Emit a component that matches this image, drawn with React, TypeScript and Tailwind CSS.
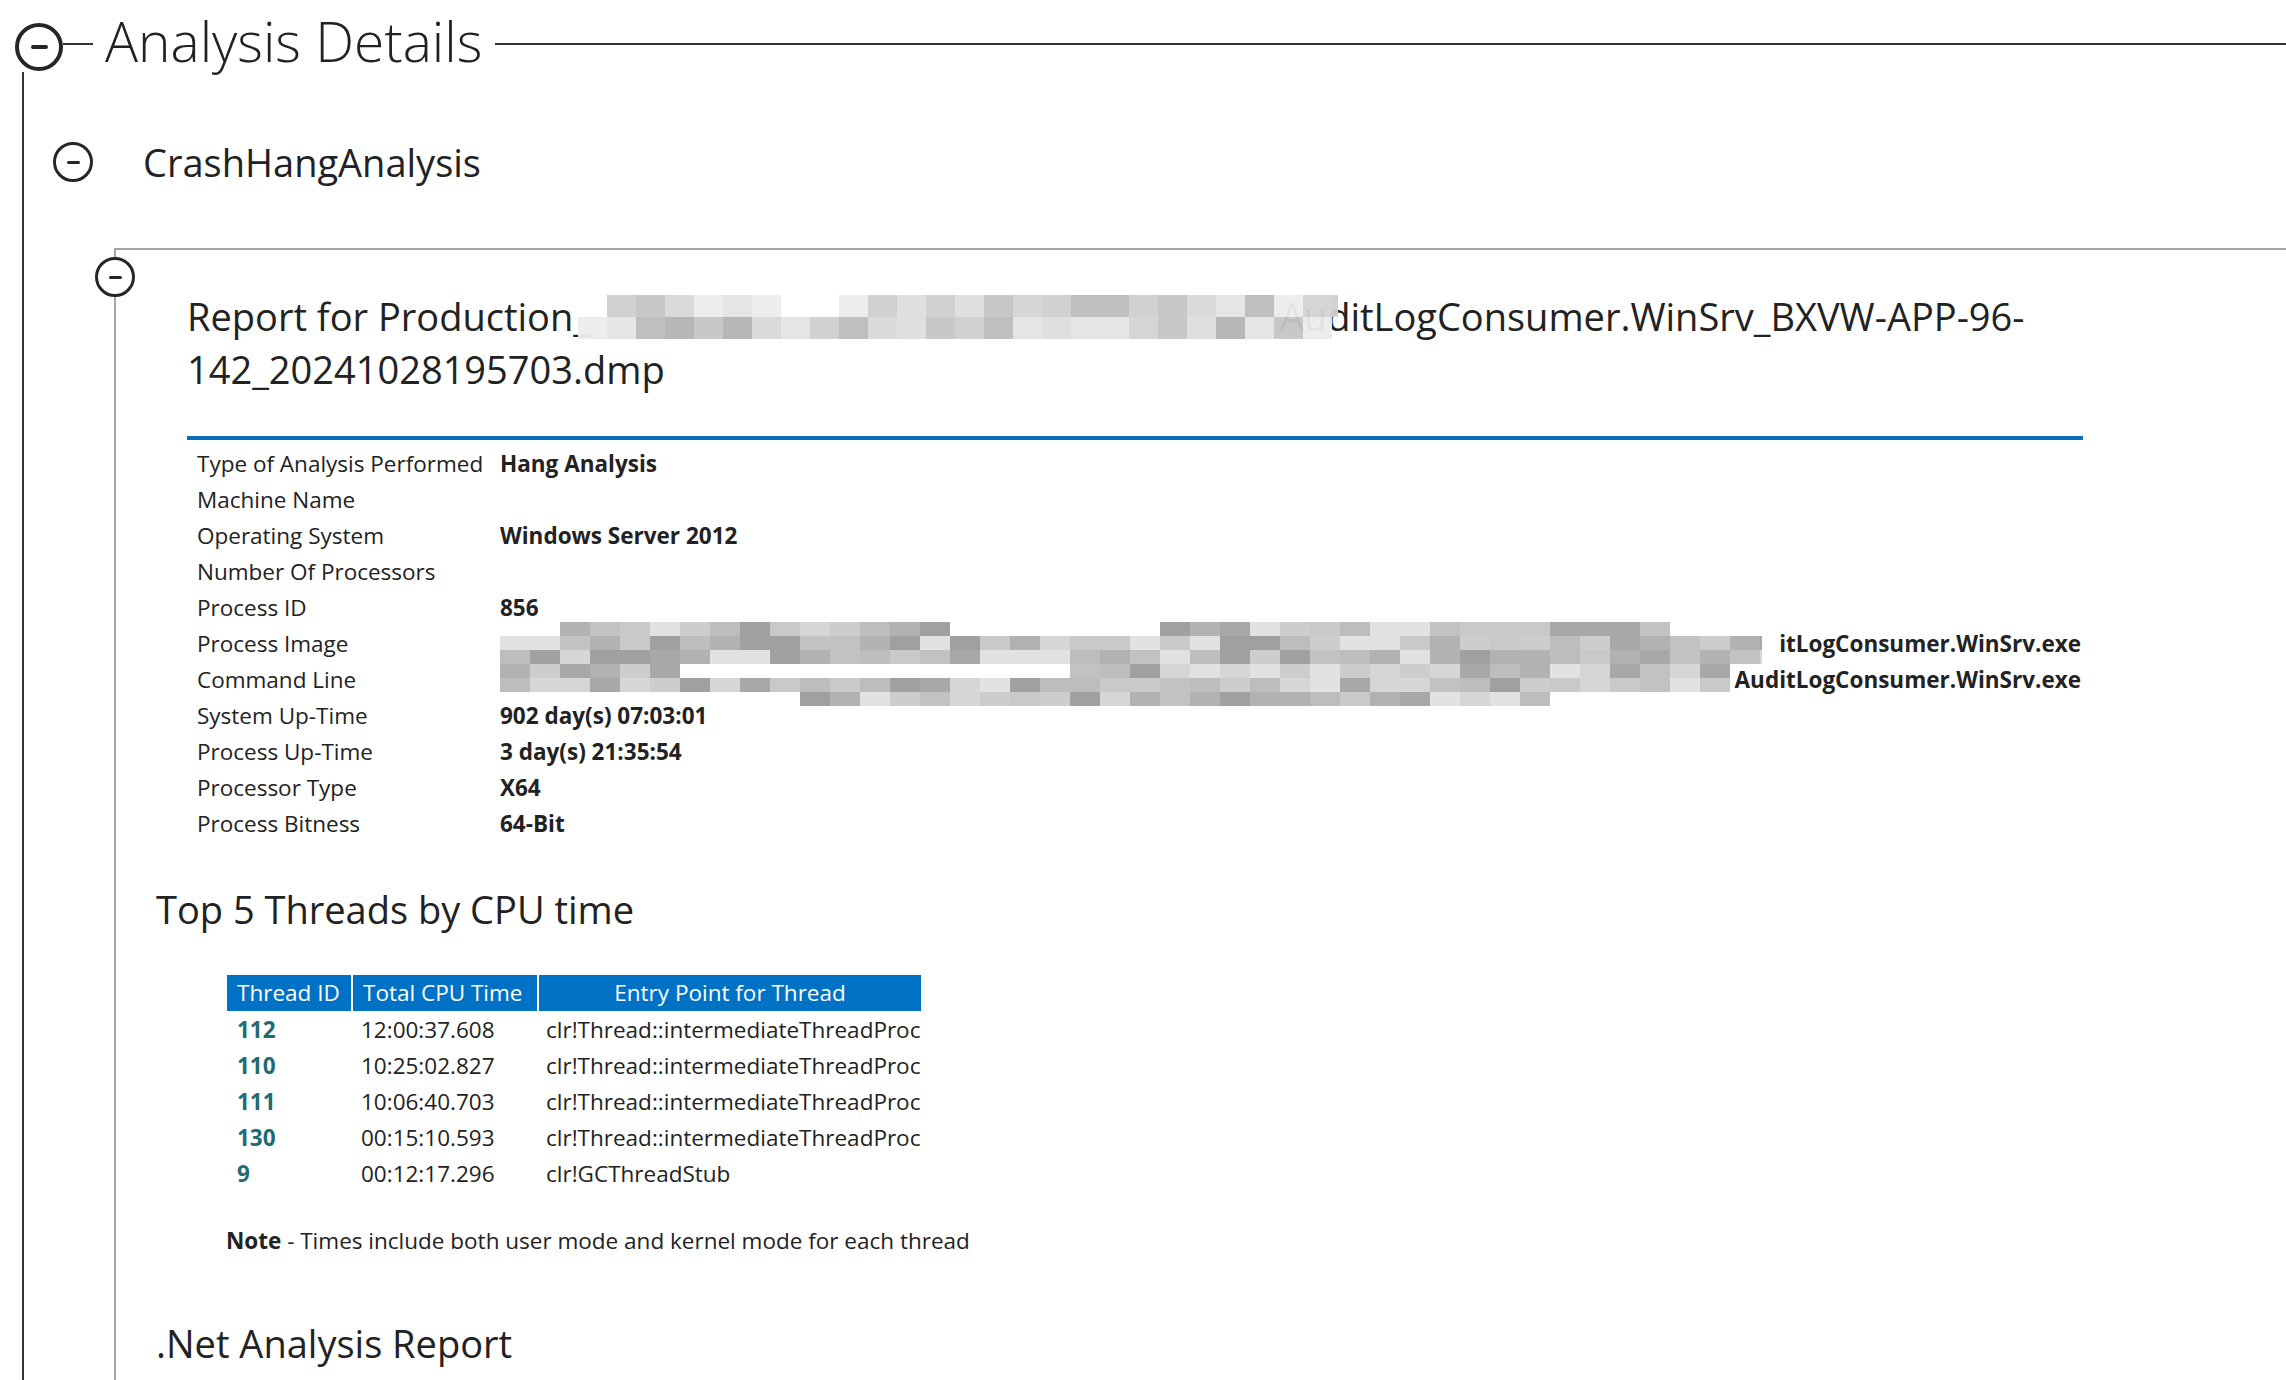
import React from "react";

// tiny seeded random so the redaction blocks come out the same every render
const seeded = (seed: number) => {
  let s = seed;
  return () => {
    s = (s * 9301 + 49297) % 233280;
    return s / 233280;
  };
};

const light = ["#d9d9d9", "#cfcfcf", "#e4e4e4", "#c6c6c6", "#bcbcbc", "#ededed", "#d3d3d3", "#b4b4b4", "#dedede"];
const dark = ["#c9c9c9", "#bdbdbd", "#d6d6d6", "#b2b2b2", "#a8a8a8", "#e2e2e2", "#c2c2c2", "#a0a0a0", "#cdcdcd"];

type MosaicProps = {
  width: number;
  height: number;
  cell: number;
  rowH: number;
  seed: number;
  palette?: string[];
  keep?: (c: number, r: number, cols: number, rows: number) => boolean;
};

const Mosaic = ({ width, height, cell, rowH, seed, palette = light, keep }: MosaicProps) => {
  const rnd = seeded(seed);
  const cols = Math.ceil(width / cell);
  const rows = Math.ceil(height / rowH);
  const rects: React.ReactElement[] = [];
  for (let c = 0; c < cols; c++) {
    for (let r = 0; r < rows; r++) {
      const pick = palette[Math.floor(rnd() * palette.length)];
      if (keep && !keep(c, r, cols, rows)) continue;
      rects.push(<rect key={c + "-" + r} x={c * cell} y={r * rowH} width={cell} height={rowH} fill={pick} />);
    }
  }
  return (
    <svg width={width} height={height} viewBox={`0 0 ${width} ${height}`} className="block">
      {rects}
    </svg>
  );
};

const Toggle = ({ big }: { big?: boolean }) => (
  <div
    className={
      big
        ? "w-12 h-12 rounded-full border-[4px] border-[#262626] bg-white flex items-center justify-center shrink-0"
        : "w-10 h-10 rounded-full border-[3px] border-[#262626] bg-white flex items-center justify-center shrink-0"
    }>
    <div className={big ? "w-[17px] h-[4px] bg-[#262626] rounded-sm" : "w-[13px] h-[3px] bg-[#262626] rounded-sm"} />
  </div>
);

const info: [string, string][] = [
  ["Type of Analysis Performed", "Hang Analysis"],
  ["Machine Name", ""],
  ["Operating System", "Windows Server 2012"],
  ["Number Of Processors", ""],
  ["Process ID", "856"],
  ["Process Image", "itLogConsumer.WinSrv.exe"],
  ["Command Line", "AuditLogConsumer.WinSrv.exe"],
  ["System Up-Time", "902 day(s) 07:03:01"],
  ["Process Up-Time", "3 day(s) 21:35:54"],
  ["Processor Type", "X64"],
  ["Process Bitness", "64-Bit"],
];

const threads = [
  ["112", "12:00:37.608", "clr!Thread::intermediateThreadProc"],
  ["110", "10:25:02.827", "clr!Thread::intermediateThreadProc"],
  ["111", "10:06:40.703", "clr!Thread::intermediateThreadProc"],
  ["130", "00:15:10.593", "clr!Thread::intermediateThreadProc"],
  ["9", "00:12:17.296", "clr!GCThreadStub"],
];

const App = () => {
  return (
    <div className="w-full h-[1380px] overflow-hidden bg-white text-[#222] font-['Open_Sans','Liberation_Sans',sans-serif]">
      {/* level 1 header */}
      <div className="flex items-start h-[72px]">
        <div className="ml-[15px] mt-[23px]">
          <Toggle big />
        </div>
        <div className="mt-[43px] w-[30px] h-[2px] bg-[#333]" />
        <h1 className="ml-[12px] mt-[13px] text-[55px] leading-none font-light whitespace-nowrap">Analysis Details</h1>
        <div className="flex-1 mt-[43px] ml-[13px] h-[2px] bg-[#333]" />
      </div>

      <div className="ml-[22px] border-l-2 border-[#333] h-[1308px]">
        {/* level 2 */}
        <div className="flex items-center pt-[70px]">
          <div className="ml-[29px]">
            <Toggle />
          </div>
          <h2 className="ml-[50px] text-[38px] leading-none whitespace-nowrap">CrashHangAnalysis</h2>
        </div>

        {/* level 3 box */}
        <div className="relative ml-[90px] mt-[66px] border-t-2 border-l-2 border-[#a6a6a6] h-[1200px]">
          <div className="absolute -left-[21px] top-[7px]">
            <Toggle />
          </div>

          <div className="pl-[71px] pt-[40px]">
            <div className="text-[38px] leading-[53px] whitespace-nowrap">
              <div className="flex items-center">
                <span>Report for Production_</span>
                <span className="relative z-10 -ml-[12px] -mr-[58px] opacity-95">
                  <Mosaic
                    width={760}
                    height={44}
                    cell={29}
                    rowH={22}
                    seed={7}
                    keep={(c, r, cols) => !(r === 0 && (c === 0 || c === 7 || c === 8)) && !(r === 1 && c === cols - 1)}
                  />
                </span>
                <span>AuditLogConsumer.WinSrv_BXVW-APP-96-</span>
              </div>
              <div>142_20241028195703.dmp</div>
            </div>

            <div className="mt-[40px] w-[1896px] h-[4px] bg-[#0a6ebd]" />

            <div className="relative w-[1896px] pl-[10px] mt-[6px] text-[22.5px]">
              {info.map(([label, value]) => {
                const right = label === "Process Image" || label === "Command Line";
                return (
                  <div key={label} className="grid grid-cols-[303px_1fr] h-[36px] items-center">
                    <span className="whitespace-nowrap">{label}</span>
                    <span className={right ? "font-bold text-right pr-[2px]" : "font-bold"}>{value}</span>
                  </div>
                );
              })}
              {/* redaction over the image / command line values */}
              <div className="absolute left-[313px] top-[176px]">
                <Mosaic
                  width={1262}
                  height={84}
                  cell={30}
                  rowH={14}
                  seed={31}
                  palette={dark}
                  keep={(c, r) => {
                    if (r < 3) return !(r === 0 && (c < 2 || (c > 14 && c < 22) || c > 38));
                    if (r === 3 && c > 5 && c < 19) return false;
                    if (r === 5 && (c < 10 || c > 34)) return false;
                    return c < 41;
                  }}
                />
              </div>
            </div>
          </div>

          <h3 className="ml-[40px] mt-[41px] text-[38px] leading-[52px] whitespace-nowrap">Top 5 Threads by CPU time</h3>

          <table className="ml-[109px] mt-[38px] border-separate border-spacing-[2px] text-[22.5px]">
            <thead>
              <tr className="bg-[#0072c6] text-white">
                <th className="w-[124px] h-[36px] px-[10px] font-normal text-left whitespace-nowrap">Thread ID</th>
                <th className="w-[184px] h-[36px] px-[10px] font-normal text-left whitespace-nowrap">Total CPU Time</th>
                <th className="w-[382px] h-[36px] px-[4px] font-normal text-center whitespace-nowrap">Entry Point for Thread</th>
              </tr>
            </thead>
            <tbody>
              {threads.map(([id, time, entry]) => (
                <tr key={id}>
                  <td className="h-[34px] px-[10px] font-bold text-[#1f6b73]">{id}</td>
                  <td className="h-[34px] px-[8px] whitespace-nowrap">{time}</td>
                  <td className="h-[34px] pl-[7px] pr-0 whitespace-nowrap">{entry}</td>
                </tr>
              ))}
            </tbody>
          </table>

          <p className="ml-[110px] mt-[30px] text-[22.5px] leading-[36px] whitespace-nowrap">
            <span className="font-bold">Note</span> - Times include both user mode and kernel mode for each thread
          </p>

          <h3 className="ml-[40px] mt-[58px] text-[38px] leading-[52px] whitespace-nowrap">.Net Analysis Report</h3>
        </div>
      </div>
    </div>
  );
};

export default App;
